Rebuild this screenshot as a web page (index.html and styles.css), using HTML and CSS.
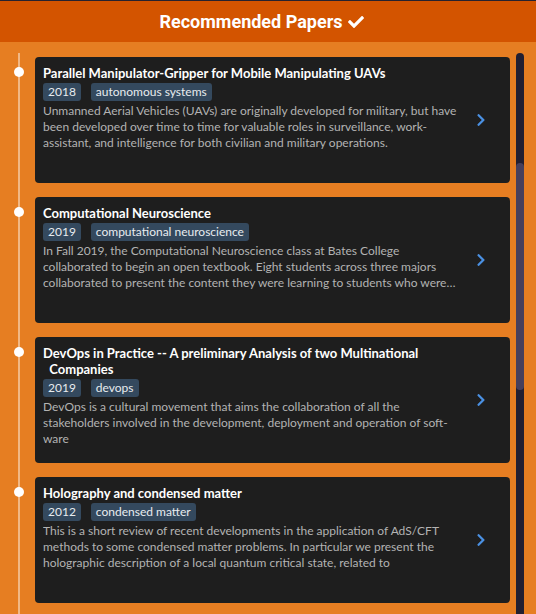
FILE: index.html
```html
<!DOCTYPE html>
<html lang="en">
<head>
<meta charset="utf-8">
<title>Recommended Papers</title>
<link rel="stylesheet" href="styles.css">
</head>
<body>
<header class="header">
  <h1 class="header-title">Recommended Papers
    <svg class="check" viewBox="0 0 512 512" width="16" height="16" aria-hidden="true"><path fill="#fff" d="M173.898 439.404l-166.4-166.4c-9.997-9.997-9.997-26.206 0-36.204l36.203-36.204c9.997-9.998 26.207-9.998 36.204 0L192 312.69 432.095 72.596c9.997-9.997 26.207-9.997 36.204 0l36.203 36.204c9.997 9.997 9.997 26.206 0 36.204l-294.4 294.401c-9.998 9.997-26.207 9.997-36.204-.001z"/></svg>
  </h1>
</header>
<main class="main">
  <div class="timeline">
    <article class="item">
      <div class="card">
        <div class="card-body">
          <h2 class="card-title">Parallel Manipulator-Gripper for Mobile Manipulating UAVs</h2>
          <div class="tags"><span class="tag">2018</span><span class="tag">autonomous systems</span></div>
          <p class="desc">Unmanned Aerial Vehicles (UAVs) are originally developed for military, but have been developed over time to time for valuable roles in surveillance, work-assistant, and intelligence for both civilian and military operations.</p>
        </div>
        <div class="card-arrow"><svg viewBox="0 0 320 512" width="10" height="14" aria-hidden="true"><path d="M285.476 272.971L91.132 467.314c-9.373 9.373-24.569 9.373-33.941 0l-22.667-22.667c-9.357-9.357-9.375-24.522-.04-33.901L188.505 256 34.484 101.255c-9.335-9.379-9.317-24.544.04-33.901l22.667-22.667c9.373-9.373 24.569-9.373 33.941 0L285.475 239.03c9.373 9.372 9.373 24.568.001 33.941z"/></svg></div>
      </div>
    </article>
    <article class="item">
      <div class="card">
        <div class="card-body">
          <h2 class="card-title">Computational Neuroscience</h2>
          <div class="tags"><span class="tag">2019</span><span class="tag">computational neuroscience</span></div>
          <p class="desc">In Fall 2019, the Computational Neuroscience class at Bates College collaborated to begin an open textbook. Eight students across three majors collaborated to present the content they were learning to students who were taking the course in the future.</p>
        </div>
        <div class="card-arrow"><svg viewBox="0 0 320 512" width="10" height="14" aria-hidden="true"><path d="M285.476 272.971L91.132 467.314c-9.373 9.373-24.569 9.373-33.941 0l-22.667-22.667c-9.357-9.357-9.375-24.522-.04-33.901L188.505 256 34.484 101.255c-9.335-9.379-9.317-24.544.04-33.901l22.667-22.667c9.373-9.373 24.569-9.373 33.941 0L285.475 239.03c9.373 9.372 9.373 24.568.001 33.941z"/></svg></div>
      </div>
    </article>
    <article class="item">
      <div class="card">
        <div class="card-body">
          <h2 class="card-title">DevOps in Practice -- A preliminary Analysis of two Multinational<br>&nbsp;&nbsp;Companies</h2>
          <div class="tags"><span class="tag">2019</span><span class="tag">devops</span></div>
          <p class="desc">DevOps is a cultural movement that aims the collaboration of all the stakeholders involved in the development, deployment and operation of soft-ware</p>
        </div>
        <div class="card-arrow"><svg viewBox="0 0 320 512" width="10" height="14" aria-hidden="true"><path d="M285.476 272.971L91.132 467.314c-9.373 9.373-24.569 9.373-33.941 0l-22.667-22.667c-9.357-9.357-9.375-24.522-.04-33.901L188.505 256 34.484 101.255c-9.335-9.379-9.317-24.544.04-33.901l22.667-22.667c9.373-9.373 24.569-9.373 33.941 0L285.475 239.03c9.373 9.372 9.373 24.568.001 33.941z"/></svg></div>
      </div>
    </article>
    <article class="item">
      <div class="card">
        <div class="card-body">
          <h2 class="card-title">Holography and condensed matter</h2>
          <div class="tags"><span class="tag">2012</span><span class="tag">condensed matter</span></div>
          <p class="desc">This is a short review of recent developments in the application of AdS/CFT methods to some condensed matter problems. In particular we present the holographic description of a local quantum critical state, related to</p>
        </div>
        <div class="card-arrow"><svg viewBox="0 0 320 512" width="10" height="14" aria-hidden="true"><path d="M285.476 272.971L91.132 467.314c-9.373 9.373-24.569 9.373-33.941 0l-22.667-22.667c-9.357-9.357-9.375-24.522-.04-33.901L188.505 256 34.484 101.255c-9.335-9.379-9.317-24.544.04-33.901l22.667-22.667c9.373-9.373 24.569-9.373 33.941 0L285.475 239.03c9.373 9.372 9.373 24.568.001 33.941z"/></svg></div>
      </div>
    </article>
  </div>
  <div class="scrollbar"><div class="scroll-thumb"></div></div>
</main>
</body>
</html>
```

FILE: styles.css
```css
* { box-sizing: border-box; }
html, body { margin: 0; padding: 0; }
body {
  background: #e67e22;
  font-family: Lato, "Open Sans", sans-serif;
  height: 614px;
  overflow: hidden;
  border-top: 1px solid #25222f;
}
.header {
  background: #d35400;
  height: 41px;
  display: flex;
  align-items: center;
  justify-content: center;
}
.header-title {
  margin: 0;
  padding-right: 13px;
  font-family: Roboto, sans-serif;
  font-weight: 700;
  font-size: 18px;
  color: #fff;
  display: flex;
  align-items: center;
  gap: 5px;
}
.check { display: block; }
.main {
  display: flex;
  padding-top: 11px;
  height: 572px;
}
.timeline {
  flex: 1;
  margin-left: 18px;
  border-left: 2px solid rgba(255, 255, 255, 0.45);
  padding-left: 15px;
  padding-top: 4px;
  display: flex;
  flex-direction: column;
  gap: 14px;
}
.item { position: relative; }
.item::before {
  content: "";
  position: absolute;
  left: -21px;
  top: 10px;
  width: 10px;
  height: 10px;
  border-radius: 50%;
  background: #fff;
}
.card {
  height: 126px;
  background: #1e1e1e;
  border-radius: 4px;
  display: flex;
  overflow: hidden;
}
.card-body {
  flex: 1;
  min-width: 0;
  padding: 8px 0 0 8px;
}
.card-title {
  margin: 0;
  font-size: 13px;
  line-height: 16px;
  font-weight: 700;
  color: #fff;
}
.tags {
  display: flex;
  gap: 10px;
  margin-top: 2px;
}
.tag {
  background: #34495e;
  color: #e8ecef;
  font-size: 12px;
  line-height: 18px;
  height: 18px;
  padding: 0 5px;
  border-radius: 3px;
}
.desc {
  margin: 2px 0 0;
  font-size: 12px;
  line-height: 16px;
  color: #b3b3b3;
  display: -webkit-box;
  -webkit-line-clamp: 3;
  -webkit-box-orient: vertical;
  overflow: hidden;
}
.card-arrow {
  width: 36px;
  margin-right: 11px;
  display: flex;
  align-items: center;
  justify-content: center;
}
.card-arrow svg { fill: #4a90e2; display: block; }
.scrollbar {
  width: 8px;
  margin: 0 12px 0 6px;
  background: #221f31;
  border-radius: 4px 4px 0 0;
  padding-top: 110px;
}
.scroll-thumb {
  height: 227px;
  background: #463f5c;
  border-radius: 4px;
}
```
